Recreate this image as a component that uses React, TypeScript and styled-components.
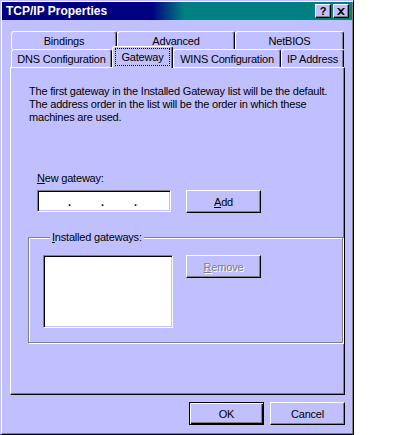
import styled, { createGlobalStyle } from 'styled-components';

const GlobalStyle = createGlobalStyle`
  html, body {
    margin: 0;
    background: #fff;
  }
`;

const Window = styled.div`
  width: 354px;
  height: 435px;
  box-sizing: border-box;
  background: #c0c0ff;
  border-top: 1px solid #c0c0ff;
  border-left: 1px solid #c0c0ff;
  border-right: 1px solid #000;
  border-bottom: 1px solid #000;
  box-shadow: inset 1px 1px #fff, inset -1px -1px #808080;
  padding: 1px;
  display: flex;
  flex-direction: column;
  font: 11px "Liberation Sans", Arial, sans-serif;
  letter-spacing: -0.2px;
  color: #000;
`;

const TitleBar = styled.div`
  height: 18px;
  display: flex;
  align-items: center;
  padding: 0 3px 0 4px;
  background: linear-gradient(to right, #000080 0, #000080 150px, #008080 182px, #008080 100%);
  color: #fff;
  font-weight: bold;
  font-size: 12px;
  letter-spacing: 0;

  span {
    flex: 1;
  }
`;

const CaptionButton = styled.div<{ $gap?: number }>`
  width: 16px;
  height: 14px;
  box-sizing: border-box;
  background: #c0c0ff;
  border-top: 1px solid #fff;
  border-left: 1px solid #fff;
  border-right: 1px solid #000;
  border-bottom: 1px solid #000;
  box-shadow: inset -1px -1px #808080;
  color: #000;
  font-weight: bold;
  font-size: 11px;
  line-height: 12px;
  display: flex;
  align-items: center;
  justify-content: center;
  margin-left: ${p => p.$gap || 0}px;
`;

const TabArea = styled.div`
  margin-top: 11px;
  padding-left: 9px;
`;

const TabRow = styled.div`
  display: flex;
  height: 18px;
  align-items: flex-end;
`;

const Tab = styled.div<{ $w: number; $active?: boolean }>`
  width: ${p => p.$w}px;
  height: ${p => (p.$active ? 22 : 18)}px;
  margin-bottom: ${p => (p.$active ? -1 : 0)}px;
  box-sizing: border-box;
  border-top: 1px solid #fff;
  border-left: 1px solid #fff;
  border-right: 1px solid #000;
  border-radius: 3px 3px 0 0;
  box-shadow: inset -1px 0 #808080;
  background: #c0c0ff;
  display: flex;
  align-items: center;
  justify-content: center;
  padding: ${p => (p.$active ? '1px 2px 2px' : '0')};
  position: relative;
  z-index: ${p => (p.$active ? 1 : 0)};
`;

const Focus = styled.div`
  flex: 1;
  align-self: stretch;
  border: 1px dotted #000;
  display: flex;
  align-items: center;
  justify-content: center;
`;

const Panel = styled.div`
  margin-left: 8px;
  width: 335px;
  height: 328px;
  box-sizing: border-box;
  border-top: 1px solid #fff;
  border-left: 1px solid #fff;
  border-right: 1px solid #000;
  border-bottom: 1px solid #000;
  box-shadow: inset -1px -1px #808080;
  padding: 17px 0 0 18px;
`;

const Info = styled.p`
  margin: 0;
  line-height: 13px;
`;

const FieldLabel = styled.div`
  margin: 48px 0 0 8px;
  line-height: 13px;
`;

const InputRow = styled.div`
  display: flex;
  gap: 15px;
  margin: 5px 0 0 8px;
`;

const Sunken = styled.div<{ $w: number; $h: number }>`
  width: ${p => p.$w}px;
  height: ${p => p.$h}px;
  box-sizing: border-box;
  background: #fff;
  border-top: 1px solid #808080;
  border-left: 1px solid #808080;
  border-right: 1px solid #fff;
  border-bottom: 1px solid #fff;
  box-shadow: inset 1px 1px #000, inset -1px -1px #c0c0ff;
`;

const IpBox = styled(Sunken)`
  display: flex;
  line-height: 22px;
`;

const IpPart = styled.span`
  width: 30px;
`;

const IpDot = styled.span`
  width: 3px;
  text-align: center;
  font-weight: bold;
`;

const Button = styled.button<{ $default?: boolean }>`
  width: 75px;
  height: 23px;
  box-sizing: border-box;
  padding: 0;
  font: inherit;
  letter-spacing: inherit;
  color: ${p => (p.disabled ? '#808080' : '#000')};
  text-shadow: ${p => (p.disabled ? '1px 1px #fff' : 'none')};
  background: #c0c0ff;
  border: 1px solid #000;
  border-top-color: ${p => (p.$default ? '#000' : '#fff')};
  border-left-color: ${p => (p.$default ? '#000' : '#fff')};
  box-shadow: ${p =>
    p.$default
      ? 'inset 1px 1px #fff, inset -1px -1px #000, inset -2px -2px #808080'
      : 'inset -1px -1px #808080'};
`;

const Group = styled.fieldset`
  margin: 18px 0 0 -1px;
  width: 315px;
  box-sizing: border-box;
  padding: 11px 0 14px 14px;
  border: 1px solid #808080;
  box-shadow: inset 1px 1px #fff, 1px 1px #fff;
  display: flex;
  gap: 13px;
  align-items: flex-start;

  legend {
    margin-left: 7px;
    padding: 0 2px;
    line-height: 13px;
    background: #c0c0ff;
  }
`;

const Footer = styled.div`
  display: flex;
  justify-content: flex-end;
  gap: 6px;
  margin-top: 7px;
  padding-right: 7px;
`;

export default function App() {
  return (
    <>
      <GlobalStyle />
      <Window>
        <TitleBar>
          <span>TCP/IP Properties</span>
          <CaptionButton>?</CaptionButton>
          <CaptionButton $gap={2}>
            <svg width="8" height="7" viewBox="0 0 8 7">
              <path d="M0 0h2l2 2 2-2h2L5 3.5 8 7H6L4 5 2 7H0l3-3.5z" fill="#000" />
            </svg>
          </CaptionButton>
        </TitleBar>
        <TabArea>
          <TabRow>
            <Tab $w={106}>Bindings</Tab>
            <Tab $w={118}>Advanced</Tab>
            <Tab $w={109}>NetBIOS</Tab>
          </TabRow>
          <TabRow>
            <Tab $w={101}>DNS Configuration</Tab>
            <Tab $w={61} $active>
              <Focus>Gateway</Focus>
            </Tab>
            <Tab $w={108}>WINS Configuration</Tab>
            <Tab $w={63}>IP Address</Tab>
          </TabRow>
        </TabArea>
        <Panel>
          <Info>
            The first gateway in the Installed Gateway list will be the default.
            <br />
            The address order in the list will be the order in which these
            <br />
            machines are used.
          </Info>
          <FieldLabel>
            <u>N</u>ew gateway:
          </FieldLabel>
          <InputRow>
            <IpBox $w={134} $h={22}>
              <IpPart />
              <IpDot>.</IpDot>
              <IpPart />
              <IpDot>.</IpDot>
              <IpPart />
              <IpDot>.</IpDot>
              <IpPart />
            </IpBox>
            <Button>
              <u>A</u>dd
            </Button>
          </InputRow>
          <Group>
            <legend>
              <u>I</u>nstalled gateways:
            </legend>
            <Sunken $w={130} $h={73} />
            <Button disabled>
              <u>R</u>emove
            </Button>
          </Group>
        </Panel>
        <Footer>
          <Button $default>OK</Button>
          <Button>Cancel</Button>
        </Footer>
      </Window>
    </>
  );
}
